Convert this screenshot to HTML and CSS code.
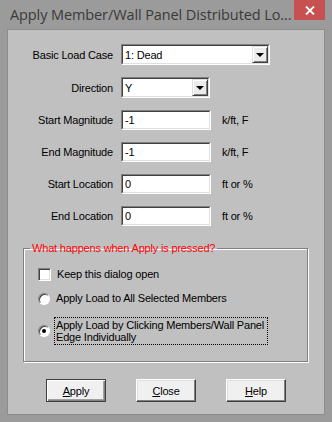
FILE: index.html
```html
<!DOCTYPE html>
<html lang="en">
<head>
    <meta charset="UTF-8">
    <title>Apply Member/Wall Panel Distributed Loads</title>
    <link rel="stylesheet" href="styles.css">
</head>
<body>

<div class="window">
    <div class="titlebar">
        <span class="title">Apply Member/Wall Panel Distributed Lo...</span>
        <button class="btn-close" title="Close">
            <svg width="10" height="9" viewBox="0 0 10 9">
                <path d="M1 0.5 L9 8.5 M9 0.5 L1 8.5" stroke="#fff" stroke-width="1.8" fill="none"/>
            </svg>
        </button>
    </div>

    <div class="client">
        <div class="form">
            <div class="row">
                <label>Basic Load Case</label>
                <div class="sunken combo-wide">
                    <div class="inner">
                        <span class="value">1: Dead</span>
                        <span class="drop"><i class="arrow"></i></span>
                    </div>
                </div>
            </div>
            <div class="row">
                <label>Direction</label>
                <div class="sunken combo-short">
                    <div class="inner">
                        <span class="value">Y</span>
                        <span class="drop"><i class="arrow"></i></span>
                    </div>
                </div>
            </div>
            <div class="row row-text">
                <label>Start Magnitude</label>
                <div class="sunken text-box"><input class="inner" type="text" value="-1"></div>
                <span class="unit">k/ft, F</span>
            </div>
            <div class="row row-text">
                <label>End Magnitude</label>
                <div class="sunken text-box"><input class="inner" type="text" value="-1"></div>
                <span class="unit">k/ft, F</span>
            </div>
            <div class="row row-text">
                <label>Start Location</label>
                <div class="sunken text-box"><input class="inner" type="text" value="0"></div>
                <span class="unit">ft or %</span>
            </div>
            <div class="row row-text">
                <label>End Location</label>
                <div class="sunken text-box"><input class="inner" type="text" value="0"></div>
                <span class="unit">ft or %</span>
            </div>
        </div>

        <fieldset class="group">
            <legend>What happens when Apply is pressed?</legend>
            <div class="option">
                <span class="check"></span>
                <span class="option-text">Keep this dialog open</span>
            </div>
            <div class="option">
                <span class="radio"></span>
                <span class="option-text">Apply Load to All Selected Members</span>
            </div>
            <div class="option">
                <span class="radio checked"></span>
                <span class="option-text focused">Apply Load by Clicking Members/Wall Panel Edge Individually</span>
            </div>
        </fieldset>

        <div class="buttons">
            <button class="btn default"><u>A</u>pply</button>
            <button class="btn"><u>C</u>lose</button>
            <button class="btn"><u>H</u>elp</button>
        </div>
    </div>
</div>

</body>
</html>
```

FILE: styles.css
```css
* {
    box-sizing: border-box;
    margin: 0;
    padding: 0;
}

body {
    background: #9b9b9b;
    font-family: 'Liberation Sans', Arial, sans-serif;
    font-size: 11px;
    color: #000;
}

.window {
    width: 332px;
    height: 422px;
    background: #9b9b9b;
    display: flex;
    flex-direction: column;
}

/* Title bar */
.titlebar {
    height: 30px;
    display: flex;
    align-items: flex-start;
}

.title {
    flex: 1;
    padding-left: 10px;
    font-family: 'Open Sans', 'Noto Sans', sans-serif;
    font-size: 14.5px;
    line-height: 30px;
    color: #3a3a3a;
    white-space: nowrap;
    overflow: hidden;
    letter-spacing: -0.1px;
}

.btn-close {
    width: 31px;
    height: 20px;
    margin-right: 7px;
    border: none;
    background: #c75050;
    display: flex;
    align-items: center;
    justify-content: center;
}

/* Client area */
.client {
    flex: 1;
    margin: 0 8px 8px;
    background: #c0c0c0;
    box-shadow: 0 0 0 1px #8c8c8c;
    padding-top: 14px;
    display: flex;
    flex-direction: column;
    letter-spacing: -0.18px;
}

.form {
    display: flex;
    flex-direction: column;
    gap: 12px;
}

.row {
    display: flex;
    align-items: center;
    height: 21px;
}

.row-text {
    height: 20px;
}

.row label {
    width: 105px;
    margin-right: 8px;
    text-align: right;
}

.unit {
    margin-left: 11px;
}

/* Sunken fields */
.sunken {
    height: 100%;
    border: 1px solid;
    border-color: #808080 #fff #fff #808080;
}

.sunken .inner {
    width: 100%;
    height: 100%;
    border: 1px solid;
    border-color: #404040 #dfdfdf #dfdfdf #404040;
    background: #fff;
    display: flex;
    align-items: center;
}

.combo-wide { width: 149px; }
.combo-short { width: 89px; }
.text-box { width: 90px; }

input.inner {
    font: inherit;
    letter-spacing: inherit;
    color: #000;
    padding-left: 2px;
    outline: none;
}

.value {
    flex: 1;
    padding-left: 2px;
}

.drop {
    width: 16px;
    height: 100%;
    background: #ececec;
    border: 1px solid;
    border-color: #dfdfdf #404040 #404040 #dfdfdf;
    box-shadow: inset 1px 1px #fff, inset -1px -1px #808080;
    display: flex;
    align-items: center;
    justify-content: center;
}

.arrow {
    width: 0;
    height: 0;
    border-left: 4px solid transparent;
    border-right: 4px solid transparent;
    border-top: 4px solid #000;
    margin-top: 1px;
}

/* Group box */
.group {
    margin: 16px 16px 0 15px;
    padding: 13px 10px 16px 14px;
    border: 1px solid #808080;
    box-shadow: inset 1px 1px #fff, 1px 1px #fff;
    display: flex;
    flex-direction: column;
    gap: 11px;
}

.group legend {
    color: #ff0000;
    padding: 0 2px;
    margin-left: -8px;
    line-height: 13px;
}

.option {
    display: flex;
    align-items: center;
    min-height: 13px;
}

.option + .option + .option {
    margin-top: 1px;
}

.check {
    width: 13px;
    height: 13px;
    border: 1px solid;
    border-color: #808080 #fff #fff #808080;
    box-shadow: inset 1px 1px #404040, inset -1px -1px #dfdfdf;
    background: #fff;
    margin-right: 6px;
    flex-shrink: 0;
}

.radio {
    width: 12px;
    height: 12px;
    border-radius: 50%;
    border: 1px solid;
    border-color: #808080 #fff #fff #808080;
    box-shadow: inset 1px 1px #404040;
    background: #fff;
    margin-right: 6px;
    flex-shrink: 0;
    display: flex;
    align-items: center;
    justify-content: center;
}

.radio.checked::after {
    content: '';
    width: 4px;
    height: 4px;
    border-radius: 50%;
    background: #000;
}

.option-text {
    line-height: 13px;
}

.option-text.focused {
    width: 214px;
    margin-left: -2px;
    padding: 1px;
    line-height: 12px;
    border: 1px dotted #000;
}

/* Buttons */
.buttons {
    display: flex;
    justify-content: center;
    gap: 30px;
    margin-top: 17px;
}

.btn {
    width: 60px;
    height: 23px;
    font: inherit;
    letter-spacing: inherit;
    color: #000;
    background: #f0f0f0;
    border: 1px solid;
    border-color: #fff #404040 #404040 #fff;
    box-shadow: inset -1px -1px #808080, inset 1px 1px #dfdfdf;
}

.btn.default {
    border: 1px solid #404040;
    box-shadow: inset 1px 1px #fff, inset -1px -1px #808080, inset -2px -2px #a0a0a0;
}
```
